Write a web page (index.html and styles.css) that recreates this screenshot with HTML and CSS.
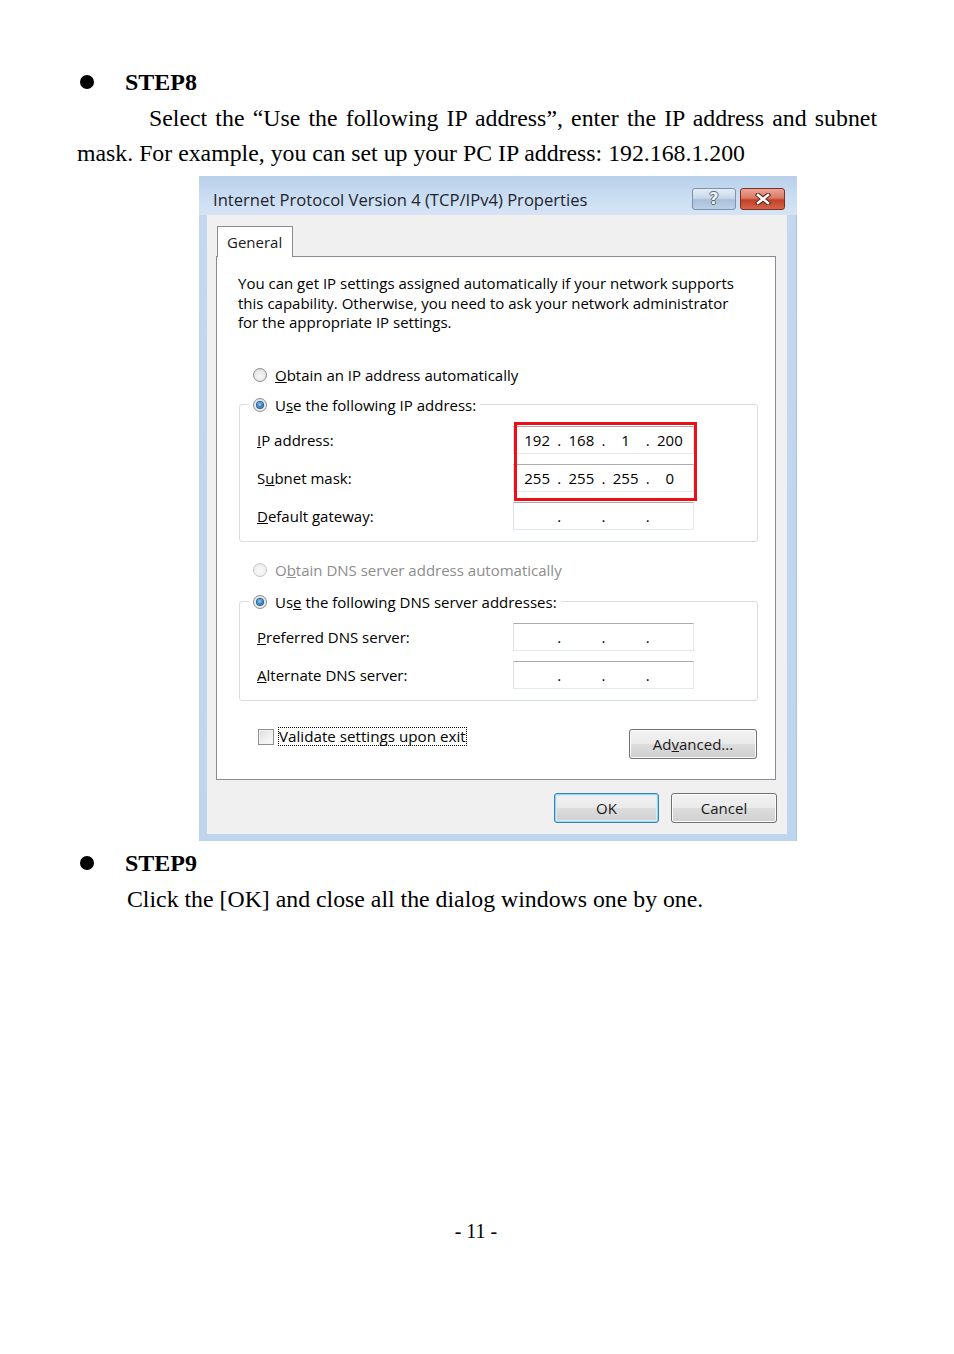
FILE: index.html
```html
<!DOCTYPE html>
<html lang="en">
<head>
<meta charset="utf-8">
<title>STEP8 - STEP9</title>
<link rel="stylesheet" href="styles.css">
</head>
<body>
<div class="page">
  <h2 class="step-title"><span class="bullet"></span>STEP8</h2>
  <p class="step-text step-text--indent">Select the “Use the following IP address”, enter the IP address and subnet mask. For example, you can set up your PC IP address: 192.168.1.200</p>

  <div class="window">
    <div class="titlebar">
      <span class="title">Internet Protocol Version 4 (TCP/IPv4) Properties</span>
      <div class="caption-buttons">
        <span class="cap-btn cap-help">?</span>
        <span class="cap-btn cap-close">
          <svg width="18" height="12" viewBox="0 0 18 12">
            <path d="M4 2 L14 10 M14 2 L4 10" stroke="#5a2418" stroke-width="4.6" stroke-linecap="square" fill="none"/>
            <path d="M4 2 L14 10 M14 2 L4 10" stroke="#ffffff" stroke-width="2.6" stroke-linecap="square" fill="none"/>
          </svg>
        </span>
      </div>
    </div>
    <div class="client">
      <div class="tabs"><span class="tab">General</span></div>
      <div class="tab-panel">
        <p class="desc">You can get IP settings assigned automatically if your network supports<br>this capability. Otherwise, you need to ask your network administrator<br>for the appropriate IP settings.</p>

        <div class="option option--first"><span class="radio"></span><span><u>O</u>btain an IP address automatically</span></div>
        <fieldset class="group">
          <legend class="option option--legend"><span class="radio radio--checked"></span><span>U<u>s</u>e the following IP address:</span></legend>
          <div class="row">
            <span class="row-label"><u>I</u>P address:</span>
            <div class="ipfield">
              <span class="oct">192</span><span class="dot">.</span><span class="oct">168</span><span class="dot">.</span><span class="oct">1</span><span class="dot">.</span><span class="oct">200</span>
              <span class="highlight"></span>
            </div>
          </div>
          <div class="row">
            <span class="row-label">S<u>u</u>bnet mask:</span>
            <div class="ipfield">
              <span class="oct">255</span><span class="dot">.</span><span class="oct">255</span><span class="dot">.</span><span class="oct">255</span><span class="dot">.</span><span class="oct">0</span>
            </div>
          </div>
          <div class="row">
            <span class="row-label"><u>D</u>efault gateway:</span>
            <div class="ipfield">
              <span class="oct"></span><span class="dot">.</span><span class="oct"></span><span class="dot">.</span><span class="oct"></span><span class="dot">.</span><span class="oct"></span>
            </div>
          </div>
        </fieldset>

        <div class="option option--second option--disabled"><span class="radio radio--disabled"></span><span>O<u>b</u>tain DNS server address automatically</span></div>
        <fieldset class="group group--dns">
          <legend class="option option--legend"><span class="radio radio--checked"></span><span>Us<u>e</u> the following DNS server addresses:</span></legend>
          <div class="row">
            <span class="row-label"><u>P</u>referred DNS server:</span>
            <div class="ipfield">
              <span class="oct"></span><span class="dot">.</span><span class="oct"></span><span class="dot">.</span><span class="oct"></span><span class="dot">.</span><span class="oct"></span>
            </div>
          </div>
          <div class="row">
            <span class="row-label"><u>A</u>lternate DNS server:</span>
            <div class="ipfield">
              <span class="oct"></span><span class="dot">.</span><span class="oct"></span><span class="dot">.</span><span class="oct"></span><span class="dot">.</span><span class="oct"></span>
            </div>
          </div>
        </fieldset>

        <div class="panel-footer">
          <div class="check-option"><span class="checkbox"></span><span class="focus-label">Validate settings upon exit</span></div>
          <span class="btn btn--advanced">Ad<u>v</u>anced...</span>
        </div>
      </div>
      <div class="dialog-buttons">
        <span class="btn btn--default">OK</span>
        <span class="btn">Cancel</span>
      </div>
    </div>
  </div>

  <h2 class="step-title step-title--second"><span class="bullet"></span>STEP9</h2>
  <p class="step-text step-text--sub">Click the [OK] and close all the dialog windows one by one.</p>

  <footer class="page-num">- 11 -</footer>
</div>
</body>
</html>
```

FILE: styles.css
```css
* { box-sizing: border-box; }

html, body {
  margin: 0;
  padding: 0;
  background: #ffffff;
}

.page {
  width: 954px;
  height: 1354px;
  padding: 67px 77px 0 77px;
  font-family: "Liberation Serif", "Times New Roman", serif;
  color: #000;
}

/* ---------- document text ---------- */
.step-title {
  display: flex;
  align-items: center;
  height: 30px;
  margin: 0;
  font-size: 24px;
  font-weight: bold;
  line-height: 30px;
}

.bullet {
  width: 14px;
  height: 14px;
  border-radius: 50%;
  background: #000;
  margin-left: 3px;
  margin-right: 31px;
}

.step-text {
  margin: 4px 0 0 0;
  font-size: 23.8px;
  line-height: 35px;
  text-align: justify;
}

.step-text--indent { text-indent: 72px; }

.step-title--second { margin-top: 7px; }

.step-text--sub {
  margin-top: 4px;
  padding-left: 50px;
}

.page-num {
  margin-top: 302px;
  text-align: center;
  font-size: 20px;
  line-height: 24px;
  padding-right: 2px;
}

/* ---------- dialog window ---------- */
.window {
  width: 598px;
  margin: 5px 0 0 122px;
  padding: 0 10px 7px 8px;
  background: linear-gradient(to bottom, #bad2ec 0%, #c3d8ef 6%, #bfd5ee 100%);
  box-shadow: inset -1px 0 0 #aac3df;
  font-family: "Open Sans", "Noto Sans", sans-serif;
  font-size: 15px;
  color: #000;
}

.titlebar {
  height: 39px;
  padding: 7px 12px 0 14px;
  display: flex;
  align-items: center;
  justify-content: space-between;
  background: linear-gradient(to bottom, #b8d0ea 0%, #c9dcf1 50%, #d6e5f5 100%);
  margin: 0 -10px 0 -8px;
}

.title {
  font-size: 16.6px;
  color: #1e2530;
}

.caption-buttons {
  display: flex;
  gap: 4px;
}

.cap-btn {
  height: 22px;
  border-radius: 3px;
  display: flex;
  align-items: center;
  justify-content: center;
}

.cap-help {
  width: 44px;
  border: 1px solid #7b93b0;
  background: linear-gradient(to bottom, #e4edf7 0%, #c9d8ea 45%, #a9c0d9 55%, #bcd0e6 100%);
  font-family: "DejaVu Sans", sans-serif;
  font-weight: bold;
  font-size: 16px;
  line-height: 1;
  color: #eef2f7;
  text-shadow: 1px 0 0 #5d6670, -1px 0 0 #5d6670, 0 1px 0 #5d6670, 0 -1px 0 #5d6670;
}

.cap-close {
  width: 45px;
  border: 1px solid #7f2f22;
  background: linear-gradient(to bottom, #eaa596 0%, #db7a66 45%, #c34026 55%, #d4654a 100%);
}

.client {
  background: #f0f0f0;
  padding: 11px 11px 11px 9px;
}

.tabs {
  display: flex;
  height: 30px;
}

.tab {
  height: 31px;
  width: 76px;
  padding: 0 0 0 9px;
  margin-left: 1px;
  border: 1px solid #898c95;
  border-bottom: none;
  background: #ffffff;
  display: flex;
  align-items: center;
  position: relative;
  z-index: 1;
  font-size: 15px;
  color: #1a1a1a;
}

.tab-panel {
  background: #ffffff;
  border: 1px solid #898c95;
  padding: 17px 17px 20px 21px;
}

.desc {
  margin: 0;
  line-height: 19.5px;
  white-space: nowrap;
}

.option {
  display: flex;
  align-items: center;
  gap: 8px;
  height: 20px;
  padding-left: 15px;
  white-space: nowrap;
}

.option--first { margin-top: 32px; }
.option--second { margin-top: 18px; }
.option--disabled { color: #8d8d8d; }

.option--legend {
  padding: 0 4px 0 4px;
  margin-left: -8px;
}

.radio {
  width: 14px;
  height: 14px;
  border-radius: 50%;
  border: 1px solid #8c8e90;
  background: radial-gradient(circle at 50% 60%, #f6f6f6 0%, #e8e8e8 55%, #d2d2d2 100%);
  position: relative;
  flex: none;
}

.radio--disabled {
  border-color: #c5c6c7;
  background: radial-gradient(circle at 50% 60%, #fafafa 0%, #f0f0f0 60%, #e4e4e4 100%);
}

.radio--checked::after {
  content: "";
  position: absolute;
  left: 3px;
  top: 3px;
  width: 6px;
  height: 6px;
  border-radius: 50%;
  background: radial-gradient(circle at 45% 40%, #9fd5f7 0%, #3c8fd0 45%, #0d3f72 100%);
  box-shadow: 0 0 0 1px #2a5c8c;
}

.group {
  margin: 10px 0 0 1px;
  padding: 6px 0 6px 17px;
  border: 1px solid #d6dee4;
  border-radius: 3px;
  min-width: 0;
}

.group--dns { margin-top: 12px; }

.row {
  display: flex;
  align-items: center;
  height: 38px;
}

.row-label {
  width: 256px;
  flex: none;
}

.ipfield {
  position: relative;
  width: 181px;
  height: 28px;
  border: 1px solid;
  border-color: #abadb3 #e2e3ea #e3e9ef #dbdfe6;
  display: grid;
  grid-template-columns: 1fr 0 1fr 0 1fr 0 1fr;
  align-items: center;
  background: #fff;
  padding: 0 1px;
  font-size: 15px;
}

.oct { text-align: center; }

.dot {
  display: flex;
  justify-content: center;
  width: 0;
  overflow: visible;
}

.highlight {
  position: absolute;
  left: 0;
  top: -5px;
  width: 183px;
  height: 79px;
  border: 3px solid #ea0f18;
  z-index: 2;
}

.panel-footer {
  display: flex;
  justify-content: space-between;
  align-items: flex-start;
  margin-top: 27px;
  padding-left: 20px;
  margin-right: 1px;
}

.check-option {
  display: flex;
  align-items: center;
  gap: 4px;
  height: 18px;
}

.checkbox {
  width: 16px;
  height: 16px;
  border: 1px solid #8f8f8f;
  background: linear-gradient(135deg, #dcdcdc 0%, #f2f2f2 60%, #fbfbfb 100%);
  box-shadow: inset 0 0 0 1px #f4f4f4;
  flex: none;
}

.focus-label {
  border: 1px dotted #000;
  line-height: 17px;
  white-space: nowrap;
  font-size: 15.2px;
}

.btn {
  width: 106px;
  height: 30px;
  display: flex;
  align-items: center;
  justify-content: center;
  border: 1px solid #707070;
  border-radius: 3px;
  background: linear-gradient(to bottom, #f2f2f2 0%, #ebebeb 48%, #dddddd 52%, #cfcfcf 100%);
  box-shadow: inset 0 0 0 1px #fcfcfc;
  color: #1a1a1a;
}

.btn--advanced {
  width: 128px;
  margin-top: 1px;
}

.btn--default {
  border-color: #3c7fb1;
  box-shadow: inset 0 0 0 1px #95d6f3, inset 0 0 0 2px #d6ecf7;
  width: 105px;
}

.dialog-buttons {
  display: flex;
  justify-content: flex-end;
  gap: 12px;
  margin-top: 13px;
  margin-right: -1px;
}
```
